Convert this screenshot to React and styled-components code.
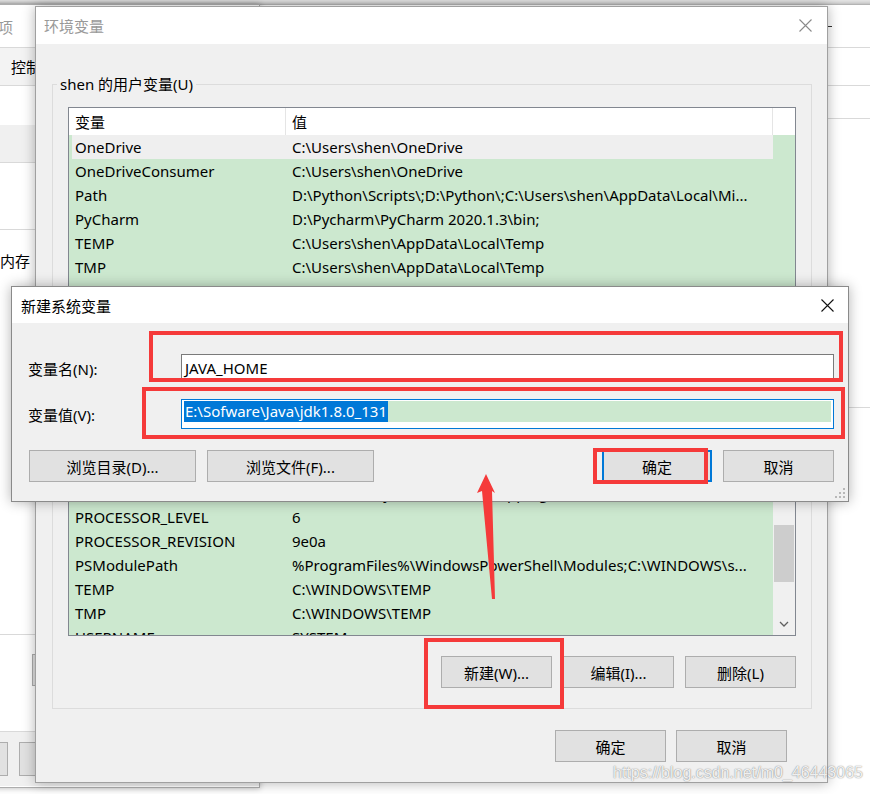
import React from 'react';
import styled, { createGlobalStyle, css } from 'styled-components';

const GlobalStyle = createGlobalStyle`
  html, body {
    margin: 0;
    padding: 0;
  }
  body {
    width: 870px;
    height: 794px;
    overflow: hidden;
    background: #e4e4e4;
    font-family: "Noto Sans", "Noto Sans CJK SC", sans-serif;
    font-size: 15px;
    color: #000;
  }
  * {
    box-sizing: border-box;
  }
`;

const Desktop = styled.div`
  position: relative;
  width: 870px;
  height: 794px;
  overflow: hidden;
`;

// ---------- windows ----------

const Window = styled.div`
  position: absolute;
  left: ${p => p.$x}px;
  top: ${p => p.$y}px;
  width: ${p => p.$w}px;
  height: ${p => p.$h}px;
  background: ${p => p.$bg || '#f0f0f0'};
  border: 1px solid ${p => p.$border || '#aaaaaa'};
  box-shadow: 0 0 ${p => p.$shadow || 10}px rgba(0, 0, 0, 0.3);
  display: flex;
  flex-direction: column;
  overflow: hidden;
`;

const TitleBar = styled.div`
  flex: none;
  height: ${p => p.$h}px;
  background: #fff;
  display: flex;
  align-items: center;
  justify-content: space-between;
  padding: 0 ${p => p.$pr}px 0 ${p => p.$pl}px;
  color: ${p => (p.$inactive ? '#999999' : '#000000')};
  white-space: nowrap;
`;

const CloseIcon = ({ color }) => (
  <svg width="13" height="13" viewBox="0 0 13 13">
    <path d="M0.5 0.5 L12.5 12.5 M12.5 0.5 L0.5 12.5" stroke={color} strokeWidth="1.1" fill="none" />
  </svg>
);

// ---------- background windows ----------

const Band = styled.div`
  flex: none;
  height: ${p => p.$h}px;
  background: ${p => p.$bg || 'transparent'};
  border-top: ${p => (p.$top ? '1px solid #d9d9d9' : 'none')};
  border-bottom: ${p => (p.$line ? '1px solid #d9d9d9' : 'none')};
  display: flex;
  align-items: ${p => p.$align || 'center'};
  gap: ${p => p.$gap || 0}px;
  padding-left: ${p => p.$pl || 0}px;
  padding-top: ${p => p.$pt || 0}px;
  color: ${p => p.$color || '#000'};
  white-space: nowrap;
`;

const GhostButton = styled.div`
  flex: none;
  width: ${p => p.$w}px;
  height: ${p => p.$h || 32}px;
  background: #e1e1e1;
  border: 1px solid #adadad;
`;

const Dash = styled.div`
  width: 10px;
  height: 1px;
  background: #333;
`;

// ---------- group / list ----------

const MainBody = styled.div`
  flex: 1;
  display: flex;
  flex-direction: column;
  padding: 0 15px 0 16px;
`;

const Group = styled.fieldset`
  margin: ${p => p.$mt}px 0 0;
  padding: 13px 15px ${p => p.$pb}px;
  border: 1px solid #dcdcdc;
  min-width: 0;
`;

const GroupLabel = styled.legend`
  margin-left: -11px;
  padding: 0 3px;
  height: 20px;
  line-height: 20px;
`;

const List = styled.div`
  height: ${p => p.$h}px;
  border: 1px solid #828790;
  background: #cce8cf;
  display: flex;
  flex-direction: column;
  overflow: hidden;
`;

const HeaderRow = styled.div`
  flex: none;
  height: 27px;
  background: #fff;
  display: grid;
  grid-template-columns: 217px 487px 22px;
`;

const HeaderCell = styled.div`
  padding-left: 6px;
  display: flex;
  align-items: center;
  border-right: 1px solid #e5e5e5;
  &:last-child {
    border-right: none;
  }
`;

const ListBody = styled.div`
  flex: 1;
  min-height: 0;
  display: flex;
`;

const Rows = styled.div`
  width: 704px;
  flex: none;
  overflow: hidden;
`;

const Row = styled.div`
  height: 24px;
  display: grid;
  grid-template-columns: 217px 487px;
  align-items: center;
  ${p =>
    p.$selected &&
    css`
      background: linear-gradient(90deg, transparent 3px, #efefef 3px);
    `}
`;

const Cell = styled.div`
  padding-left: 6px;
  white-space: nowrap;
  overflow: hidden;
`;

const Scrollbar = styled.div`
  width: 22px;
  flex: none;
  background: #f0f0f0;
  display: flex;
  flex-direction: column;
`;

const ScrollArrow = styled.div`
  flex: none;
  height: 22px;
  display: flex;
  align-items: center;
  justify-content: center;
`;

const ScrollTrack = styled.div`
  flex: 1;
`;

const Thumb = styled.div`
  margin: ${p => p.$offset}px 1px 0 1px;
  height: ${p => p.$size}px;
  background: #cdcdcd;
`;

const Chevron = ({ up }) => (
  <svg width="10" height="6" viewBox="0 0 10 6">
    <path d={up ? 'M1 5 L5 1 L9 5' : 'M1 1 L5 5 L9 1'} stroke="#606060" strokeWidth="1.3" fill="none" />
  </svg>
);

// ---------- buttons ----------

const ButtonRow = styled.div`
  display: flex;
  justify-content: ${p => p.$justify || 'flex-end'};
  gap: ${p => p.$gap || 11}px;
  margin-top: ${p => p.$mt || 0}px;
  margin-right: ${p => p.$mr || 0}px;
  margin-left: ${p => p.$ml || 0}px;
`;

const Button = styled.button`
  flex: none;
  width: ${p => p.$w}px;
  height: 32px;
  padding: 0;
  background: #e1e1e1;
  border: 1px solid #adadad;
  font: inherit;
  color: #000;
  ${p =>
    p.$default &&
    css`
      border: 2px solid #0078d7;
    `}
`;

const Spacer = styled.div`
  flex: 1;
`;

// ---------- new variable dialog ----------

const DialogBody = styled.div`
  flex: 1;
  padding: 31px 14px 0 16px;
  display: flex;
  flex-direction: column;
`;

const FieldRow = styled.div`
  display: flex;
  align-items: center;
  margin-top: ${p => p.$mt || 0}px;
`;

const FieldLabel = styled.div`
  width: 153px;
  flex: none;
`;

const TextBox = styled.div`
  flex: 1;
  height: ${p => p.$h}px;
  background: #fff;
  border: 1px solid ${p => (p.$focus ? '#0078d7' : '#7a7a7a')};
  padding: ${p => (p.$focus ? '1px 2px' : '0 3px')};
  display: flex;
  align-items: ${p => (p.$focus ? 'flex-start' : 'center')};
  white-space: nowrap;
`;

const EditLine = styled.div`
  flex: 1;
  height: 21px;
  background: #cce8cf;
  display: flex;
  align-items: center;
`;

const Selection = styled.span`
  background: #0078d7;
  color: #fff;
  line-height: 21px;
  padding: 0 1px;
`;

const Grip = styled.svg`
  position: absolute;
  right: 2px;
  bottom: 2px;
`;

// ---------- annotations ----------

const RedBox = styled.div`
  position: absolute;
  left: ${p => p.$x}px;
  top: ${p => p.$y}px;
  width: ${p => p.$w}px;
  height: ${p => p.$h}px;
  border: 4px solid #f53a3a;
  pointer-events: none;
`;

const Arrow = styled.svg`
  position: absolute;
  left: 470px;
  top: 470px;
`;

const Watermark = styled.div`
  position: absolute;
  left: 613px;
  top: 764px;
  font-family: "Liberation Sans", Arial, sans-serif;
  font-size: 16px;
  color: rgba(255, 255, 255, 0.9);
  text-shadow: 0 0 1px rgba(0, 0, 0, 0.45), 0 0 2px rgba(0, 0, 0, 0.2);
  white-space: nowrap;
`;

// ---------- data ----------

const userVars = [
  ['OneDrive', 'C:\\Users\\shen\\OneDrive', true],
  ['OneDriveConsumer', 'C:\\Users\\shen\\OneDrive'],
  ['Path', 'D:\\Python\\Scripts\\;D:\\Python\\;C:\\Users\\shen\\AppData\\Local\\Mi...'],
  ['PyCharm', 'D:\\Pycharm\\PyCharm 2020.1.3\\bin;'],
  ['TEMP', 'C:\\Users\\shen\\AppData\\Local\\Temp'],
  ['TMP', 'C:\\Users\\shen\\AppData\\Local\\Temp'],
  ['', ''],
];

const systemVars = [
  ['PATHEXT', '.COM;.EXE;.BAT;.CMD;.VBS;.VBE;.JS;.JSE;.WSF;.WSH;.MSC'],
  ['PROCESSOR_ARCHITECTURE', 'AMD64'],
  ['PROCESSOR_IDENTIFIER', 'Intel64 Family 6 Model 158 Stepping 10, GenuineIntel'],
  ['PROCESSOR_LEVEL', '6'],
  ['PROCESSOR_REVISION', '9e0a'],
  ['PSModulePath', '%ProgramFiles%\\WindowsPowerShell\\Modules;C:\\WINDOWS\\s...'],
  ['TEMP', 'C:\\WINDOWS\\TEMP'],
  ['TMP', 'C:\\WINDOWS\\TEMP'],
  ['USERNAME', 'SYSTEM'],
];

const VarList = ({ height, vars, scroll }) => (
  <List $h={height}>
    <HeaderRow>
      <HeaderCell>变量</HeaderCell>
      <HeaderCell>值</HeaderCell>
      <HeaderCell />
    </HeaderRow>
    <ListBody>
      <Rows>
        {vars.map(([name, value, selected], i) => (
          <Row key={i} $selected={selected}>
            <Cell>{name}</Cell>
            <Cell>{value}</Cell>
          </Row>
        ))}
      </Rows>
      {scroll && (
        <Scrollbar>
          <ScrollArrow><Chevron up /></ScrollArrow>
          <ScrollTrack>
            <Thumb $offset={70} $size={57} />
          </ScrollTrack>
          <ScrollArrow><Chevron /></ScrollArrow>
        </Scrollbar>
      )}
    </ListBody>
  </List>
);

export default function App() {
  return (
    <>
      <GlobalStyle />
      <Desktop>
        {/* window far behind, on the right */}
        <Window $x={-10} $y={4} $w={900} $h={800} $bg="#fff" $border="#b4b4b4" $shadow={4}>
          <Band $h={43} $line $pl={831}><Dash /></Band>
          <Band $h={38} $line />
          <Band $h={33} $line />
          <Band $h={289} $line />
        </Window>

        {/* 性能选项 window on the left */}
        <Window $x={-60} $y={4} $w={320} $h={784} $bg="#fff" $border="#adadad" $shadow={6}>
          <Band $h={43} $line $pl={12} $color="#999">性能选项</Band>
          <Band $h={38} $line $pl={70} $bg="#f3f3f3">控制面板</Band>
          <Band $h={39} />
          <Band $h={38} $line $bg="#f0f0f0" />
          <Band $h={67} $line />
          <Band $h={60} $pl={29}>虚拟内存</Band>
          <Band $h={345} $line />
          <Band $h={96} $align="flex-start" $pt={19} $pl={91}>
            <GhostButton $w={110} />
          </Band>
          <Band $h={55} $top $bg="#f0f0f0" $gap={11}>
            <GhostButton $w={67} $h={34} />
            <GhostButton $w={110} $h={34} />
          </Band>
        </Window>

        {/* 环境变量 */}
        <Window $x={35} $y={6} $w={793} $h={777} $border="#a0a0a0" $shadow={12}>
          <TitleBar $h={37} $pl={8} $pr={15} $inactive>
            <span>环境变量</span>
            <CloseIcon color="#8a8a8a" />
          </TitleBar>
          <MainBody>
            <Group $mt={30} $pb={14}>
              <GroupLabel>shen 的用户变量(U)</GroupLabel>
              <VarList height={197} vars={userVars} />
              <ButtonRow $mt={12}>
                <Button $w={111}>新建(N)...</Button>
                <Button $w={111}>编辑(E)...</Button>
                <Button $w={111}>删除(D)</Button>
              </ButtonRow>
            </Group>
            <Group $mt={9} $pb={20}>
              <GroupLabel>系统变量(S)</GroupLabel>
              <VarList height={231} vars={systemVars} scroll />
              <ButtonRow $mt={20}>
                <Button $w={111}>新建(W)...</Button>
                <Button $w={111}>编辑(I)...</Button>
                <Button $w={111}>删除(L)</Button>
              </ButtonRow>
            </Group>
            <ButtonRow $mt={21} $mr={25} $gap={10}>
              <Button $w={111}>确定</Button>
              <Button $w={111}>取消</Button>
            </ButtonRow>
          </MainBody>
        </Window>

        {/* 新建系统变量 */}
        <Window $x={11} $y={286} $w={838} $h={216} $border="#8a8a8a" $shadow={12}>
          <TitleBar $h={36} $pl={9} $pr={14}>
            <span>新建系统变量</span>
            <CloseIcon color="#111" />
          </TitleBar>
          <DialogBody>
            <FieldRow>
              <FieldLabel>变量名(N):</FieldLabel>
              <TextBox $h={28}>JAVA_HOME</TextBox>
            </FieldRow>
            <FieldRow $mt={17}>
              <FieldLabel>变量值(V):</FieldLabel>
              <TextBox $h={30} $focus>
                <EditLine>
                  <Selection>E:\Sofware\Java\jdk1.8.0_131</Selection>
                </EditLine>
              </TextBox>
            </FieldRow>
            <ButtonRow $mt={21} $ml={1} $justify="flex-start">
              <Button $w={167}>浏览目录(D)...</Button>
              <Button $w={167}>浏览文件(F)...</Button>
              <Spacer />
              <Button $w={110} $default>确定</Button>
              <Button $w={111}>取消</Button>
            </ButtonRow>
          </DialogBody>
          <Grip width="12" height="12" viewBox="0 0 12 12" fill="#b8b8b8">
            <rect x="9" y="1" width="2" height="2" />
            <rect x="5" y="5" width="2" height="2" />
            <rect x="9" y="5" width="2" height="2" />
            <rect x="1" y="9" width="2" height="2" />
            <rect x="5" y="9" width="2" height="2" />
            <rect x="9" y="9" width="2" height="2" />
          </Grip>
        </Window>

        {/* annotations */}
        <RedBox $x={149} $y={331} $w={694} $h={51} />
        <RedBox $x={142} $y={387} $w={703} $h={52} />
        <RedBox $x={593} $y={448} $w={115} $h={36} />
        <RedBox $x={424} $y={638} $w={140} $h={71} />
        <Arrow width="30" height="135" viewBox="0 0 30 135">
          <polygon points="16,4 7,23 12,21 22,129 25,129 22,21 25,23" fill="#f53a3a" />
        </Arrow>
        <Watermark>https://blog.csdn.net/m0_46443065</Watermark>
      </Desktop>
    </>
  );
}
